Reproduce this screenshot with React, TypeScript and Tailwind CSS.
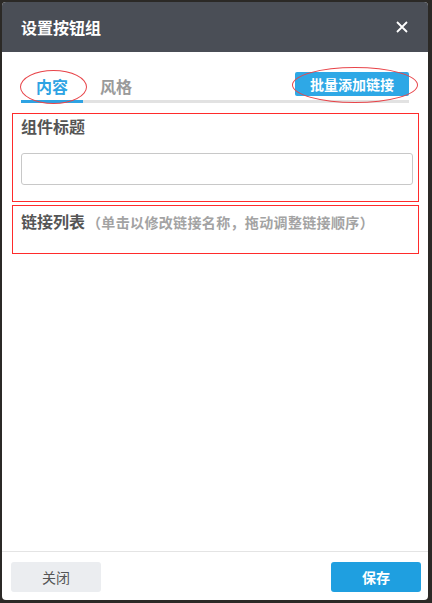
import React from "react";

const font = { fontFamily: '"Noto Sans CJK SC", "Noto Sans", sans-serif' };

export default function App() {
    return (
        <div className="w-[432px] h-[603px] bg-[#2b2926] pt-[2px] pl-[2px]" style={font}>
            <div className="relative flex h-[598px] w-[426px] flex-col overflow-hidden rounded-[4px] bg-white">
                {/* header */}
                <div className="flex h-[50px] shrink-0 items-center justify-between bg-[#4a4e56] pl-[19px] pr-[20px]">
                    <h1 className="text-[16px] font-bold text-white">设置按钮组</h1>
                    <svg width="12" height="12" viewBox="0 0 12 12" className="text-white">
                        <path d="M1 1L11 11M11 1L1 11" stroke="currentColor" strokeWidth="1.8" />
                    </svg>
                </div>

                {/* tabs */}
                <div className="relative mx-[19px] mt-[20px] flex items-end justify-between border-b-[3px] border-[#e2e2e2]">
                    <div className="flex items-end">
                        <div className="-mb-[3px] w-[62px] border-b-[3px] border-[#2ea3e3] pb-[2px] text-center text-[16px] font-bold text-[#2ea3e3]">
                            内容
                        </div>
                        <div className="ml-[17px] pb-[2px] text-[16px] font-bold text-[#9a9a9a]">风格</div>
                    </div>
                    <button className="mb-[4px] h-[24px] w-[114px] rounded-[2px] bg-[#2ea8e6] text-[14px] font-bold text-white">
                        批量添加链接
                    </button>
                    {/* annotation ellipses */}
                    <div className="pointer-events-none absolute left-[-1px] top-[-2px] h-[34px] w-[67px] rounded-[50%] border border-[#e8454a]" />
                    <div className="pointer-events-none absolute right-[-9px] top-[-5px] h-[36px] w-[126px] rounded-[50%] border border-[#e8454a]" />
                </div>

                {/* title section */}
                <div className="ml-[10px] mr-[9px] mt-[10px] h-[89px] border border-[#ff2b2b] pl-[8px] pt-0">
                    <div className="text-[16px] font-bold text-[#555]">组件标题</div>
                    <input className="mt-[15px] h-[32px] w-[392px] rounded-[3px] border border-[#c8c8c8] bg-white outline-none" />
                </div>

                {/* link list section */}
                <div className="ml-[10px] mr-[9px] mt-[3px] h-[49px] border border-[#ff2b2b] pl-[8px] pt-[3px]">
                    <div className="flex items-baseline">
                        <span className="text-[16px] font-bold text-[#555]">链接列表</span>
                        <span className="ml-[2px] text-[14px] font-bold tracking-[0.35px] text-[#a3a3a3]">（单击以修改链接名称，拖动调整链接顺序）</span>
                    </div>
                </div>

                <div className="flex-1" />

                {/* footer */}
                <div className="flex h-[49px] shrink-0 items-start justify-between border-t border-[#e4e4e4] pl-[9px] pr-[7px] pt-[10px]">
                    <button className="h-[30px] w-[90px] rounded-[3px] bg-[#ebedf0] text-[14px] text-[#555]">关闭</button>
                    <button className="h-[30px] w-[90px] rounded-[3px] bg-[#1f9fe0] text-[14px] font-bold text-white">保存</button>
                </div>
            </div>
        </div>
    );
}
